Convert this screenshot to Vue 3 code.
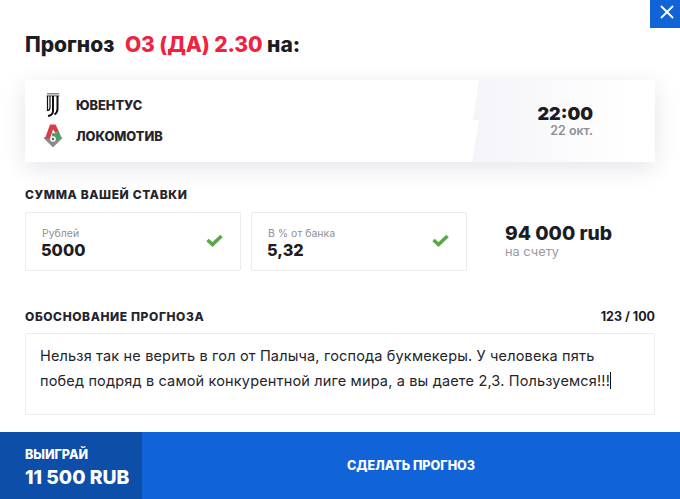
<script setup>
const teams = ['ЮВЕНТУС', 'ЛОКОМОТИВ']
const inputs = [
  { label: 'Рублей', value: '5000' },
  { label: 'В % от банка', value: '5,32' }
]
</script>

<template>
  <div class="modal">
    <button class="close" aria-label="Закрыть">
      <svg width="14" height="14" viewBox="0 0 14 14"><path d="M1 1l12 12M13 1L1 13" stroke="#fff" stroke-width="1.800" fill="none" /></svg>
    </button>
    <div class="content">
      <h1 class="title">Прогноз <span class="odd">ОЗ (ДА) 2.30</span> на:</h1>

      <div class="match">
        <div class="teams">
          <div class="team">
            <svg class="logo" width="20" height="24" viewBox="0 0 20 24">
              <rect x="4" y="0" width="12" height="1.500" fill="#888" />
              <rect x="3.500" y="2.500" width="13" height="0.800" fill="#222" />
              <path d="M4.500 3v14.500c1.500 0 2.500-1 2.500-3V3" fill="none" stroke="#111" stroke-width="1.200" />
              <path d="M10 3v15c0 2.500-2 4.500-5 5" fill="none" stroke="#111" stroke-width="2" />
              <path d="M14.500 3v13c0 2.500-1 4-3 5.500" fill="none" stroke="#111" stroke-width="2" />
            </svg>
            <span>{{ teams[0] }}</span>
          </div>
          <div class="team">
            <svg class="logo" width="20" height="24" viewBox="0 0 20 24">
              <path d="M0.500 14L10 23.500 19.500 14l-2-1H2z" fill="#8a8b8f" />
              <path d="M2 14.500L7 0.500h5.500l3.500 7-3.500 1.500-2.500-3.500-3 9z" fill="#d4404a" />
              <path d="M9.500 8.500l2 1 4.500-2 2.500 6.500-4.500 2.500-5.500-2.500z" fill="#4a9e68" />
              <circle cx="10" cy="15" r="2.800" fill="#fff" />
              <circle cx="10" cy="15" r="1.200" fill="#555" />
            </svg>
            <span>{{ teams[1] }}</span>
          </div>
        </div>
        <div class="time">
          <div class="clock">22:00</div>
          <div class="date">22 окт.</div>
        </div>
      </div>

      <h2 class="label first">СУММА ВАШЕЙ СТАВКИ</h2>
      <div class="stake">
        <div v-for="item in inputs" :key="item.label" class="field">
          <div>
            <div class="field-label">{{ item.label }}</div>
            <div class="field-value">{{ item.value }}</div>
          </div>
          <svg width="17" height="13" viewBox="0 0 17 13"><path d="M1.500 6l5 4.500 9-8.500" fill="none" stroke="#5aa949" stroke-width="3.600" /></svg>
        </div>
        <div class="balance">
          <div class="balance-value">94 000 rub</div>
          <div class="balance-label">на счету</div>
        </div>
      </div>

      <div class="reason-head">
        <h2 class="label">ОБОСНОВАНИЕ ПРОГНОЗА</h2>
        <span class="count">123 / 100</span>
      </div>
      <div class="reason">
        Нельзя так не верить в гол от Палыча, господа букмекеры. У человека пять<br />
        побед подряд в самой конкурентной лиге мира, а вы даете 2,3. Пользуемся!!!<span class="caret"></span>
      </div>
    </div>

    <div class="footer">
      <div class="win">
        <div class="win-label">ВЫИГРАЙ</div>
        <div class="win-value">11 500 RUB</div>
      </div>
      <div class="submit">СДЕЛАТЬ ПРОГНОЗ</div>
    </div>
  </div>
</template>

<style scoped>
.modal {
  position: relative;
  width: 680px;
  height: 499px;
  background: #fff;
  overflow: hidden;
  font-family: Inter, "Open Sans", sans-serif;
  color: #1c1c24;
  display: flex;
  flex-direction: column;
  justify-content: space-between;
}
.close {
  position: absolute;
  top: 0;
  right: 0;
  width: 30px;
  height: 28px;
  border: 0;
  padding: 0 0 5px 4px;
  box-sizing: border-box;
  background: #1164d8;
  display: flex;
  align-items: center;
  justify-content: center;
}
.content {
  padding: 32px 25px 0;
  display: flex;
  flex-direction: column;
}
.title {
  margin: 0;
  font-size: 21px;
  line-height: 25px;
  font-weight: 800;
}
.odd {
  color: #f0233f;
  margin-left: 6px;
  letter-spacing: -0.1px;
}
.match {
  margin-top: 23px;
  height: 82px;
  display: flex;
  justify-content: space-between;
  background: #fff;
  box-shadow: 0 6px 22px rgba(40, 40, 80, 0.12);
}
.teams {
  padding: 13px 0 0 18px;
  display: flex;
  flex-direction: column;
  gap: 7px;
}
.team {
  display: flex;
  align-items: center;
  gap: 13px;
  height: 24px;
  font-size: 12.800px;
  font-weight: 800;
  color: #24242c;
}
.time {
  width: 184px;
  box-sizing: border-box;
  padding: 23px 62px 0 0;
  text-align: right;
  background: linear-gradient(90deg, #f4f4f9, #ffffff 85%);
  clip-path: polygon(8px 0, 100% 0, 100% 100%, 1px 100%, 8px 40px, 2px 40px);
}
.clock {
  font-size: 18px;
  line-height: 21px;
  font-weight: 900;
}
.date {
  font-size: 12.500px;
  line-height: 13px;
  font-weight: 600;
  color: #8f8f96;
}
.label {
  margin: 0;
  font-size: 12px;
  line-height: 16px;
  font-weight: 800;
  letter-spacing: 0.6px;
  color: #24242c;
}
.first { margin-top: 25px; }
.stake {
  margin-top: 9px;
  display: flex;
  gap: 10px;
}
.field {
  width: 216px;
  height: 59px;
  box-sizing: border-box;
  padding: 14px 17px 0 15px;
  border: 1px solid #ececf0;
  border-radius: 2px;
  display: flex;
  justify-content: space-between;
  align-items: flex-start;
}
.field svg { margin-top: 7px; }
.field-label {
  font-size: 10.500px;
  line-height: 14px;
  color: #8f8f96;
  padding-left: 1px;
}
.field-value {
  font-size: 16.300px;
  line-height: 18px;
  font-weight: 800;
}
.balance { margin: 11px 0 0 28px; }
.balance-value {
  font-size: 19.300px;
  line-height: 20px;
  font-weight: 800;
  white-space: nowrap;
}
.balance-label {
  margin-top: 2px;
  font-size: 12.800px;
  line-height: 14px;
  color: #9a9aa0;
}
.reason-head {
  margin-top: 38px;
  display: flex;
  justify-content: space-between;
  align-items: center;
}
.count {
  font-size: 12.500px;
  line-height: 16px;
  font-weight: 700;
}
.reason {
  margin-top: 8px;
  height: 82px;
  box-sizing: border-box;
  padding: 9px 14px 0;
  border: 1px solid #ececf0;
  border-radius: 2px;
  font-size: 14.500px;
  letter-spacing: 0.16px;
  line-height: 25px;
  white-space: nowrap;
  color: #24242c;
}
.caret {
  display: inline-block;
  width: 1px;
  height: 17px;
  background: #111;
  vertical-align: -3px;
}
.footer {
  height: 67px;
  display: flex;
  color: #fff;
  background: #1164d8;
}
.win {
  width: 142px;
  box-sizing: border-box;
  padding: 15px 0 0 25px;
  background: #0c4ea8;
}
.win-label {
  font-size: 12.500px;
  line-height: 15px;
  font-weight: 800;
}
.win-value {
  margin-top: 4px;
  font-size: 19.300px;
  line-height: 22px;
  font-weight: 800;
  white-space: nowrap;
}
.submit {
  flex: 1;
  display: flex;
  align-items: center;
  padding-left: 205px;
  font-size: 12.600px;
  font-weight: 800;
}
</style>
